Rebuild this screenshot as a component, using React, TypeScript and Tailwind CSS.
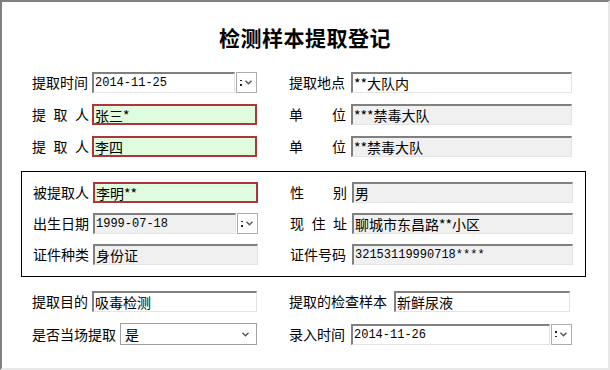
import React from "react";

const CJK = { fontFamily: '"SimSun","Noto Sans CJK SC",sans-serif' };
const MONO = { fontFamily: '"Liberation Mono","Noto Sans CJK SC",monospace' };

function Label({ text, w = 60, justify = false }: { text: string; w?: number; justify?: boolean }) {
  if (justify) {
    const chars = text.split("");
    return (
      <div className="flex shrink-0" style={{ width: w }}>
        <div className="flex justify-between w-[57px] text-[14px] text-[#000]">
          {chars.map((c, i) => (
            <span key={i}>{c}</span>
          ))}
        </div>
      </div>
    );
  }
  return (
    <div className="shrink-0 text-[14px] text-black whitespace-nowrap" style={{ width: w }}>
      {text}
    </div>
  );
}

function Input({
  value,
  w,
  variant = "white",
  mono = false,
}: {
  value: string;
  w: number;
  variant?: "white" | "gray" | "req";
  mono?: boolean;
}) {
  const base =
    variant === "req"
      ? "border-2 border-[#b0343c] bg-[#dffcdf]"
      : variant === "gray"
      ? "border-t-2 border-l-2 border-b border-r border-t-[#808080] border-l-[#808080] border-b-[#e4e4e4] border-r-[#e4e4e4] bg-[#f0f0f0]"
      : "border-t-2 border-l-2 border-b border-r border-t-[#808080] border-l-[#808080] border-b-[#e4e4e4] border-r-[#e4e4e4] bg-white";
  return (
    <div
      className={`h-[21px] flex items-center pl-[1px] overflow-hidden whitespace-nowrap ${base}`}
      style={{ width: w }}
    >
      <span className={mono ? "text-[12px] text-black" : "text-[14px] text-black leading-none"} style={mono ? MONO : CJK}>
        {value}
      </span>
    </div>
  );
}

function Chevron() {
  return (
    <svg width="7" height="5" viewBox="0 0 7 5">
      <path d="M0.5 0.8 L3.5 3.8 L6.5 0.8" fill="none" stroke="#555" strokeWidth="1.4" />
    </svg>
  );
}

function DateBtn() {
  return (
    <div className="ml-[1px] w-[21px] h-[21px] border border-[#acacac] bg-white flex items-center pl-[3px] gap-[3px]">
      <span className="flex flex-col gap-[3px]">
        <span className="w-[1.5px] h-[1.5px] bg-[#222]" />
        <span className="w-[1.5px] h-[1.5px] bg-[#222]" />
      </span>
      <Chevron />
    </div>
  );
}

function DateInput({ value, w, variant = "white" }: { value: string; w: number; variant?: "white" | "gray" }) {
  return (
    <div className="flex items-center">
      <Input value={value} w={w} variant={variant} mono />
      <DateBtn />
    </div>
  );
}

export default function App() {
  return (
    <div
      className="w-[610px] h-[370px] bg-white border-t-2 border-l-2 border-r-2 border-b-2 border-t-[#808080] border-l-[#808080] border-r-[#e8e8e8] border-b-[#e8e8e8] flex flex-col"
      style={CJK}
    >
      <div className="h-[56px] flex items-end justify-center pb-[5px]">
        <span className="text-[21px] font-bold text-black tracking-[0.5px]">检测样本提取登记</span>
      </div>

      <div className="flex flex-col gap-[11px] pl-[30px] mt-[14px]">
        <div className="flex items-center h-[21px]">
          <Label text="提取时间" />
          <div className="w-[197px] flex">
            <DateInput value="2014-11-25" w={143} />
          </div>
          <Label text="提取地点" w={62} />
          <Input value="**大队内" w={221} />
        </div>
        <div className="flex items-center h-[21px]">
          <Label text="提取人" justify />
          <div className="w-[197px] flex">
            <Input value="张三*" w={165} variant="req" />
          </div>
          <Label text="单位" justify w={62} />
          <Input value="***禁毒大队" w={221} variant="gray" />
        </div>
        <div className="flex items-center h-[21px]">
          <Label text="提取人" justify />
          <div className="w-[197px] flex">
            <Input value="李四" w={165} variant="req" />
          </div>
          <Label text="单位" justify w={62} />
          <Input value="**禁毒大队" w={221} variant="gray" />
        </div>
      </div>

      <div className="ml-[19px] mt-[14px] w-[565px] h-[106px] border border-black flex flex-col gap-[10px] pl-[11px] pt-[10px]">
        <div className="flex items-center h-[21px]">
          <Label text="被提取人" />
          <div className="w-[197px] flex">
            <Input value="李明**" w={165} variant="req" />
          </div>
          <Label text="性别" justify w={62} />
          <Input value="男" w={221} variant="gray" />
        </div>
        <div className="flex items-center h-[21px]">
          <Label text="出生日期" />
          <div className="w-[197px] flex">
            <DateInput value="1999-07-18" w={143} variant="gray" />
          </div>
          <Label text="现住址" justify w={62} />
          <Input value="聊城市东昌路**小区" w={221} variant="gray" />
        </div>
        <div className="flex items-center h-[21px]">
          <Label text="证件种类" />
          <div className="w-[197px] flex">
            <Input value="身份证" w={165} variant="gray" />
          </div>
          <Label text="证件号码" w={62} />
          <Input value="32153119990718****" w={221} variant="gray" mono />
        </div>
      </div>

      <div className="flex flex-col gap-[11px] pl-[30px] mt-[14px]">
        <div className="flex items-center h-[21px]">
          <Label text="提取目的" />
          <div className="w-[197px] flex">
            <Input value="吸毒检测" w={165} />
          </div>
          <Label text="提取的检查样本" w={105} />
          <Input value="新鲜尿液" w={176} />
        </div>
        <div className="flex items-center h-[22px]">
          <Label text="是否当场提取" w={88} />
          <div className="w-[169px] flex">
            <div className="w-[137px] h-[22px] border border-[#a0a0a0] bg-white flex items-center justify-between pl-[4px] pr-[7px]">
              <span className="text-[14px] text-black">是</span>
              <Chevron />
            </div>
          </div>
          <Label text="录入时间" w={62} />
          <DateInput value="2014-11-26" w={199} />
        </div>
      </div>
    </div>
  );
}
